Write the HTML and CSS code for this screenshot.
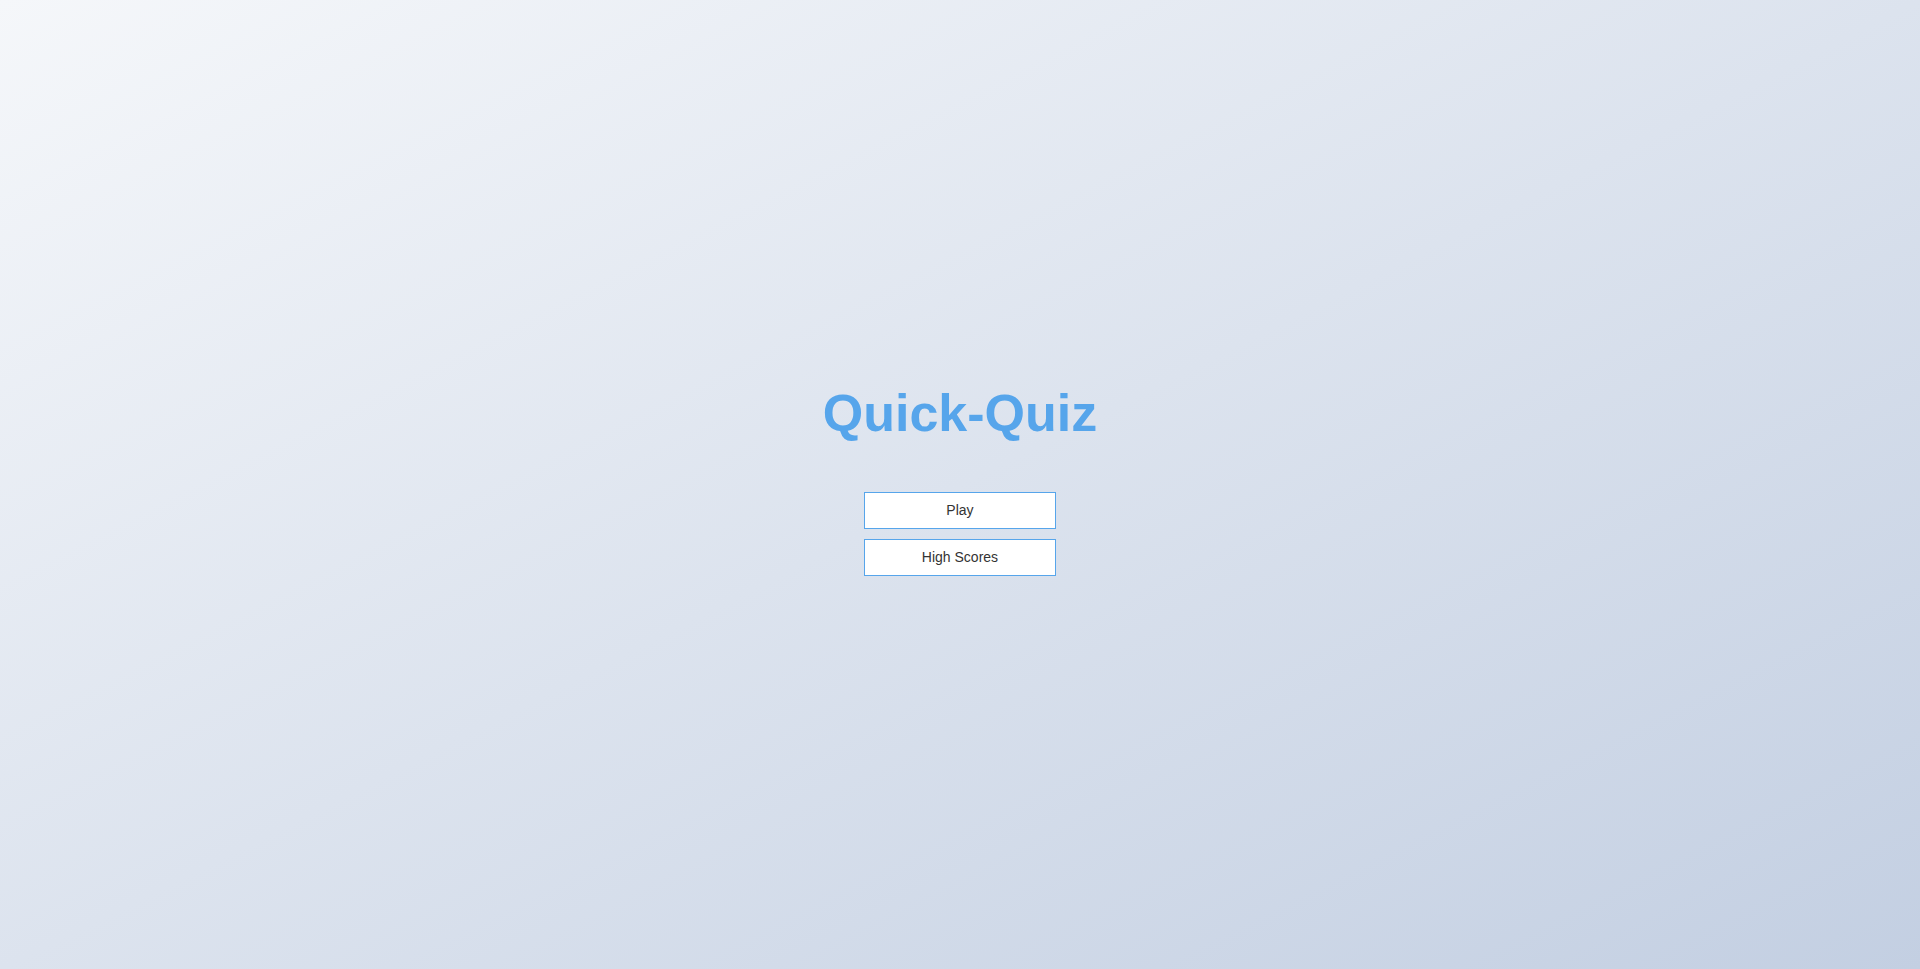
FILE: index.html
```html
<!DOCTYPE html>
<html lang="en">
<head>
<meta charset="UTF-8">
<title>Quick-Quiz</title>
<link rel="stylesheet" href="styles.css">
</head>
<body>
<div class="container">
  <div class="home">
    <h1 class="title">Quick-Quiz</h1>
    <a class="btn" href="#">Play</a>
    <a class="btn" href="#">High Scores</a>
  </div>
</div>
</body>
</html>
```
FILE: styles.css
```css
* {
  box-sizing: border-box;
}

html, body {
  margin: 0;
  padding: 0;
  height: 100%;
}

body {
  font-family: "Liberation Sans", Arial, Helvetica, sans-serif;
  background: linear-gradient(to right bottom, #f5f7fa, #c3cfe2);
  color: #333;
}

.container {
  width: 100%;
  height: 100vh;
  display: flex;
  align-items: center;
  justify-content: center;
}

.home {
  display: flex;
  flex-direction: column;
  align-items: center;
}

.title {
  font-size: 52px;
  line-height: normal;
  color: #56a5eb;
  margin: 0 0 49px 0;
  font-weight: bold;
}

.btn {
  display: block;
  width: 192px;
  font-size: 14px;
  line-height: 15px;
  padding: 10px 0;
  text-align: center;
  border: 1px solid #56a5eb;
  background-color: #fff;
  color: #333;
  text-decoration: none;
  margin-bottom: 10px;
}
```
